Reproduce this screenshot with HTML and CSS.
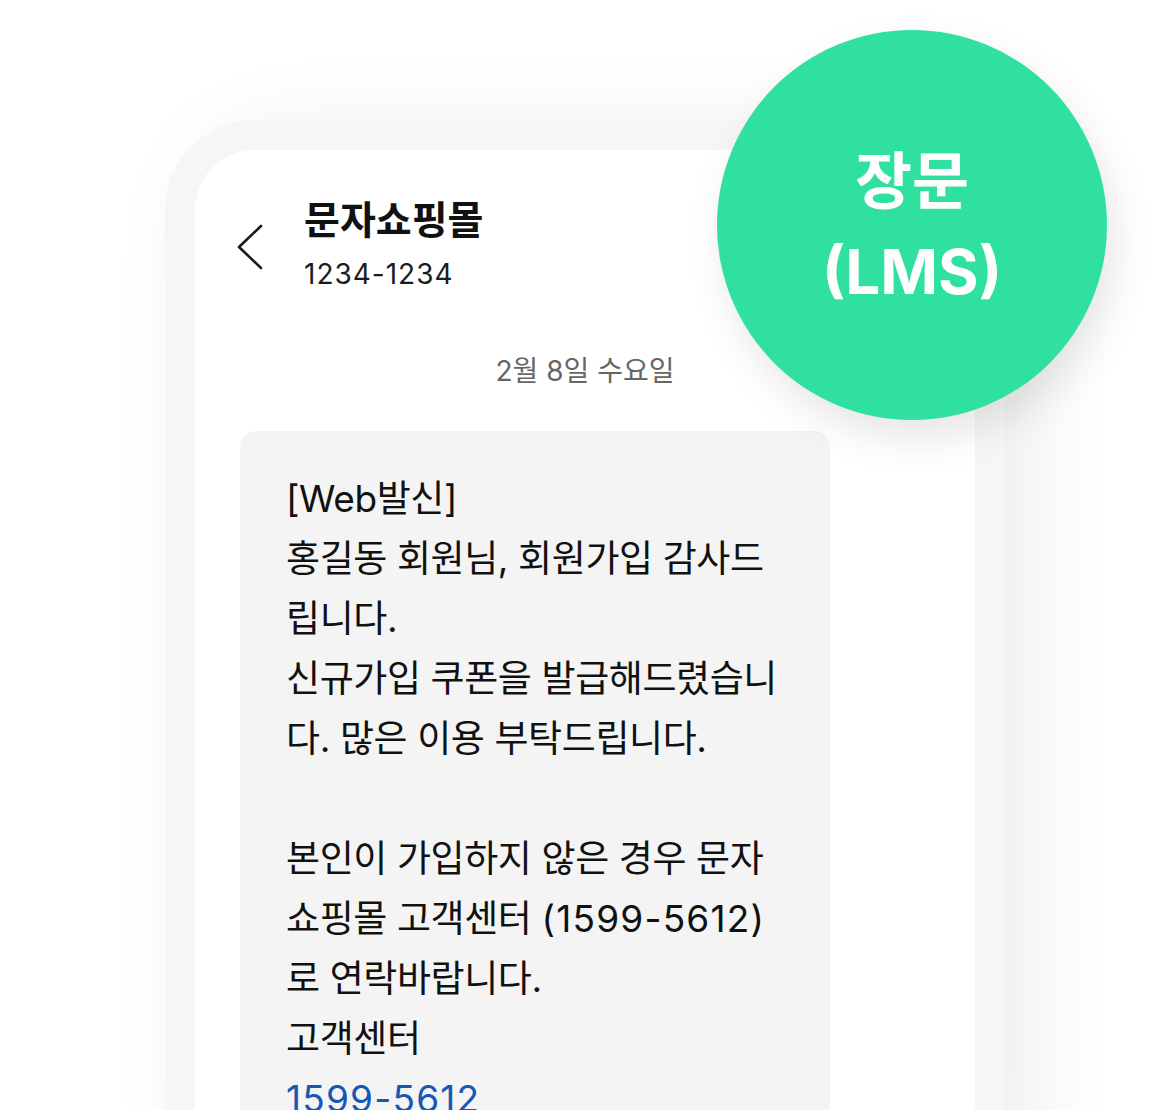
FILE: index.html
```html
<!DOCTYPE html>
<html lang="ko">
<head>
    <meta charset="UTF-8">
    <meta name="viewport" content="width=device-width, initial-scale=1.0">
    <title>장문 (LMS) 미리보기</title>
    <link rel="stylesheet" href="styles.css">
</head>
<body>
    <div class="stage">
        <!-- Phone frame -->
        <div class="phone">
            <div class="screen">
                <!-- Chat header -->
                <header class="chat-header">
                    <svg class="back" width="28" height="46" viewBox="0 0 28 46" aria-hidden="true">
                        <polyline points="25,2 3,23 25,44" fill="none" stroke="#1a1a1a" stroke-width="2.6" stroke-linecap="round" stroke-linejoin="round"/>
                    </svg>
                    <div class="sender">
                        <h1>문자쇼핑몰</h1>
                        <p class="number">1234-1234</p>
                    </div>
                </header>

                <p class="date">2월 8일 수요일</p>

                <!-- Message bubble -->
                <div class="bubble">
                    <p>[Web발신]<br>
                    홍길동 회원님, 회원가입 감사드립니다.<br>
                    신규가입 쿠폰을 발급해드렸습니다. 많은 이용 부탁드립니다.<br>
                    <br>
                    본인이 가입하지 않은 경우 문자쇼핑몰 고객센터 <span class="tel">(1599-5612)</span>로 연락바랍니다.<br>
                    고객센터<br>
                    <a class="tel" href="#">1599-5612</a></p>
                </div>
            </div>
        </div>

        <!-- Type badge -->
        <div class="badge">
            <span>장문</span>
            <span>(LMS)</span>
        </div>
    </div>
</body>
</html>
```

FILE: styles.css
```css
* {
    margin: 0;
    padding: 0;
    box-sizing: border-box;
    font-family: Inter, 'Noto Sans CJK KR', sans-serif;
}

html, body {
    height: 100%;
    overflow: hidden;
}

body {
    background-color: #fff;
    color: #111;
}

.stage {
    position: relative;
    padding: 120px 0 0 165px;
}

.phone {
    width: 840px;
    min-height: 1040px;
    padding: 30px 30px 0;
    background-color: #f6f6f6;
    border-radius: 90px 90px 0 0;
    box-shadow: 30px 10px 90px rgba(0, 0, 0, 0.07);
}

.screen {
    min-height: 1010px;
    background-color: #fff;
    border-radius: 60px 60px 0 0;
    padding: 45px 0 0 45px;
}

.chat-header {
    display: flex;
    align-items: center;
    gap: 40px;
}

.back {
    margin: 4px 0 0 -4px;
    display: block;
}

.sender h1 {
    font-size: 39px;
    font-weight: 700;
    line-height: 50px;
    color: #111;
}

.sender .number {
    font-size: 28px;
    line-height: 40px;
    margin-top: 9px;
    letter-spacing: 1px;
    color: #1c1c1c;
}

.date {
    margin: 57px 0 0 -45px;
    text-align: center;
    font-size: 28px;
    line-height: 40px;
    color: #666;
}

.bubble {
    width: 590px;
    margin-top: 40px;
    padding: 38px 50px 40px 46px;
    background-color: #f4f4f4;
    border-radius: 16px;
}

.bubble p {
    font-size: 37px;
    line-height: 60px;
    letter-spacing: -0.4px;
    color: #111;
}

.bubble .tel {
    letter-spacing: 1.2px;
}

.bubble a {
    color: #1758b5;
    text-decoration: none;
}

.badge {
    position: absolute;
    left: 717px;
    top: 30px;
    width: 390px;
    height: 390px;
    border-radius: 50%;
    background-color: #30e09f;
    box-shadow: 8px 18px 40px rgba(0, 0, 0, 0.1);
    display: flex;
    flex-direction: column;
    align-items: center;
    justify-content: center;
    padding-top: 4px;
    color: #fff;
    font-size: 62px;
    line-height: 90px;
}

.badge span {
    font-weight: 700;
}
```
